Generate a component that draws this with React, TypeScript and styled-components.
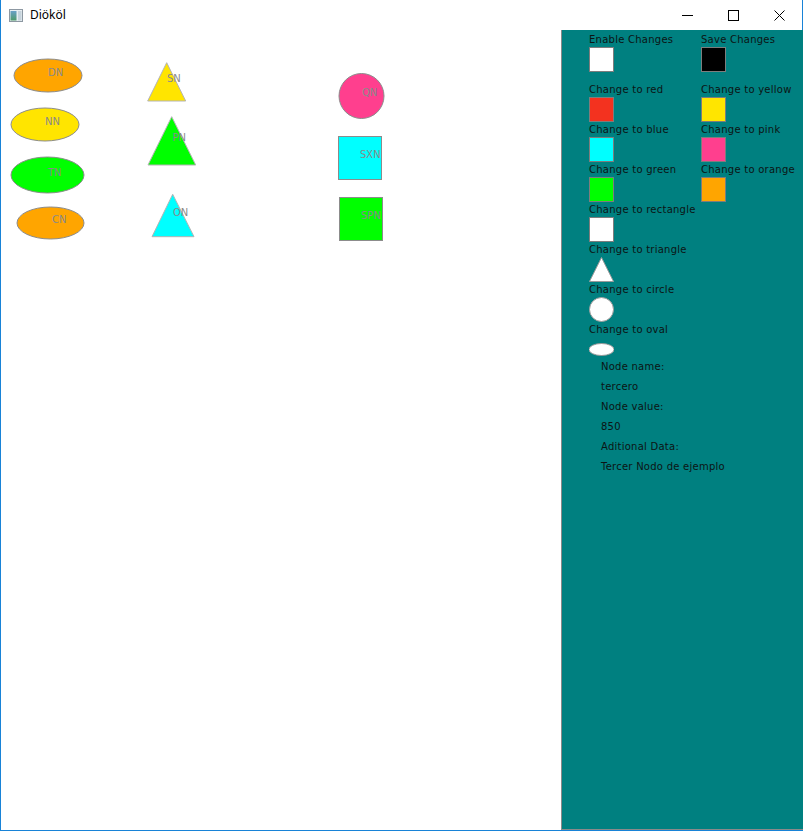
import React from "react";
import styled, { createGlobalStyle } from "styled-components";

const Global = createGlobalStyle`
  html, body { margin: 0; padding: 0; background: #ffffff; }
  body { width: 803px; height: 832px; overflow: hidden; }
`;

const Window = styled.div`
  width: 803px;
  height: 831px;
  box-sizing: border-box;
  border: 1px solid #1883d7;
  border-top: none;
  display: flex;
  flex-direction: column;
  background: #ffffff;
`;

const TitleBar = styled.div`
  height: 30px;
  flex: none;
  display: flex;
  align-items: center;
  font-family: "Noto Sans", "Liberation Sans", sans-serif;
  font-size: 12px;
  color: #000;
`;

const AppIcon = styled.svg`
  margin-left: 8px;
  margin-right: 7px;
  flex: none;
`;

const Title = styled.span`
  flex: 1;
  line-height: 16px;
`;

const CtrlButton = styled.div`
  width: 46px;
  height: 30px;
  display: flex;
  align-items: center;
  justify-content: center;
`;

const Client = styled.div`
  flex: 1;
  display: flex;
  min-height: 0;
`;

const Canvas = styled.div`
  position: relative;
  width: 560px;
  flex: none;
`;

const CanvasSvg = styled.svg`
  display: block;
  width: 560px;
  height: 799px;
`;

const Panel = styled.aside`
  flex: 1;
  background: #008080;
  border: 1px solid #8a8a8a;
  border-top: none;
  padding: 2px 0 0 27px;
  font-family: "DejaVu Sans", sans-serif;
  font-size: 10px;
  letter-spacing: 0.25px;
  color: #0c1414;
`;

const ButtonGrid = styled.div`
  display: grid;
  grid-template-columns: 112px 112px;
`;

const Item = styled.div<{ $gapAfter?: number }>`
  display: flex;
  flex-direction: column;
  align-items: flex-start;
  margin-bottom: ${(p) => p.$gapAfter ?? 0}px;
`;

const Label = styled.div`
  height: 14px;
  line-height: 16px;
  white-space: nowrap;
  margin-bottom: 1px;
`;

const Swatch = styled.div<{ $color: string }>`
  width: 25px;
  height: 25px;
  box-sizing: border-box;
  border: 1px solid #7d7d7d;
  background: ${(p) => p.$color};
`;

const ShapeBox = styled.svg`
  display: block;
  width: 25px;
  height: 25px;
`;

const Info = styled.div`
  margin-top: -5px;
  padding-left: 12px;
`;

const InfoLine = styled.div`
  height: 20px;
  line-height: 20px;
  white-space: nowrap;
`;

const nodeText = {
  fill: "#8a8a8a",
  fontFamily: "'DejaVu Sans', sans-serif",
  fontSize: 10,
  dominantBaseline: "central" as const,
};

const NodeLabel: React.FC<{ x: number; y: number; children: string }> = ({ x, y, children }) => (
  <text x={x} y={y} style={nodeText}>
    {children}
  </text>
);

const STROKE = "#8c8c8c";

export default function App() {
  const grid: [string, string][] = [
    ["Change to red", "#f3321f"],
    ["Change to yellow", "#ffe500"],
    ["Change to blue", "#00ffff"],
    ["Change to pink", "#ff3f8e"],
    ["Change to green", "#00ff00"],
    ["Change to orange", "#ffa500"],
  ];
  return (
    <>
      <Global />
      <Window>
        <TitleBar>
          <AppIcon width="14" height="13" viewBox="0 0 14 13">
            <defs>
              <linearGradient id="ig" x1="0" y1="0" x2="0" y2="1">
                <stop offset="0" stopColor="#6aa0c8" />
                <stop offset="1" stopColor="#4f9a6a" />
              </linearGradient>
            </defs>
            <rect x="0.5" y="0.5" width="13" height="12" fill="#e8eef2" stroke="#8d98a2" />
            <rect x="1.5" y="2" width="6" height="9.5" fill="url(#ig)" />
            <rect x="9" y="2" width="3.5" height="9.5" fill="#c6d3dc" />
          </AppIcon>
          <Title>Diököl</Title>
          <CtrlButton>
            <svg width="11" height="11" viewBox="0 0 11 11">
              <line x1="0" y1="5.5" x2="11" y2="5.5" stroke="#000" strokeWidth="1" />
            </svg>
          </CtrlButton>
          <CtrlButton>
            <svg width="11" height="11" viewBox="0 0 11 11">
              <rect x="0.5" y="0.5" width="10" height="10" fill="none" stroke="#000" strokeWidth="1" />
            </svg>
          </CtrlButton>
          <CtrlButton>
            <svg width="11" height="11" viewBox="0 0 11 11">
              <path d="M0.5 0.5 L10.5 10.5 M10.5 0.5 L0.5 10.5" stroke="#000" strokeWidth="1" fill="none" />
            </svg>
          </CtrlButton>
        </TitleBar>
        <Client>
          <Canvas>
            <CanvasSvg viewBox="1 30 560 799">
              <ellipse cx="48" cy="75.5" rx="34" ry="16.5" fill="#ffa500" stroke={STROKE} />
              <NodeLabel x={48} y={72.5}>DN</NodeLabel>
              <ellipse cx="45" cy="124.5" rx="34" ry="16.5" fill="#ffe500" stroke={STROKE} />
              <NodeLabel x={45} y={121}>NN</NodeLabel>
              <ellipse cx="47.5" cy="175" rx="36.5" ry="18" fill="#00ff00" stroke={STROKE} />
              <NodeLabel x={48} y={172}>TN</NodeLabel>
              <ellipse cx="50.5" cy="223" rx="33.5" ry="16" fill="#ffa500" stroke={STROKE} />
              <NodeLabel x={52} y={219}>CN</NodeLabel>

              <polygon points="166.7,62.7 147.7,101 185.7,101" fill="#ffe500" stroke="#b4b4b4" />
              <NodeLabel x={167} y={78}>SN</NodeLabel>
              <polygon points="171.7,116.7 148,165 195.7,165" fill="#00ff00" stroke="#b4b4b4" />
              <NodeLabel x={172.5} y={137}>PN</NodeLabel>
              <polygon points="172.7,194.3 152,236.7 194,236.7" fill="#00ffff" stroke="#b4b4b4" />
              <NodeLabel x={173} y={212}>ON</NodeLabel>

              <circle cx="361.5" cy="96" r="22.5" fill="#ff3f8e" stroke={STROKE} />
              <NodeLabel x={362} y={92.5}>QN</NodeLabel>
              <rect x="338.5" y="136.5" width="43" height="43" fill="#00ffff" stroke={STROKE} />
              <NodeLabel x={360} y={154}>SXN</NodeLabel>
              <rect x="339.5" y="197.5" width="43" height="43" fill="#00ff00" stroke={STROKE} />
              <NodeLabel x={361} y={215}>SPN</NodeLabel>
            </CanvasSvg>
          </Canvas>
          <Panel>
            <ButtonGrid>
              <Item $gapAfter={10}>
                <Label>Enable Changes</Label>
                <Swatch $color="#ffffff" />
              </Item>
              <Item $gapAfter={10}>
                <Label>Save Changes</Label>
                <Swatch $color="#000000" />
              </Item>
              {grid.map(([label, color]) => (
                <Item key={label}>
                  <Label>{label}</Label>
                  <Swatch $color={color} />
                </Item>
              ))}
            </ButtonGrid>
            <Item>
              <Label>Change to rectangle</Label>
              <Swatch $color="#ffffff" />
            </Item>
            <Item>
              <Label>Change to triangle</Label>
              <ShapeBox viewBox="0 0 25 25">
                <polygon points="12.5,0.5 0.5,24.5 24.5,24.5" fill="#ffffff" stroke="#9a9a9a" />
              </ShapeBox>
            </Item>
            <Item>
              <Label>Change to circle</Label>
              <ShapeBox viewBox="0 0 25 25">
                <circle cx="12.5" cy="12.5" r="12" fill="#ffffff" stroke="#9a9a9a" />
              </ShapeBox>
            </Item>
            <Item>
              <Label>Change to oval</Label>
              <ShapeBox viewBox="0 0 25 25">
                <ellipse cx="12.5" cy="12.5" rx="12.5" ry="6" fill="#ffffff" stroke="#9a9a9a" />
              </ShapeBox>
            </Item>
            <Info>
              <InfoLine>Node name:</InfoLine>
              <InfoLine>tercero</InfoLine>
              <InfoLine>Node value:</InfoLine>
              <InfoLine>850</InfoLine>
              <InfoLine>Aditional Data:</InfoLine>
              <InfoLine>Tercer Nodo de ejemplo</InfoLine>
            </Info>
          </Panel>
        </Client>
      </Window>
    </>
  );
}
